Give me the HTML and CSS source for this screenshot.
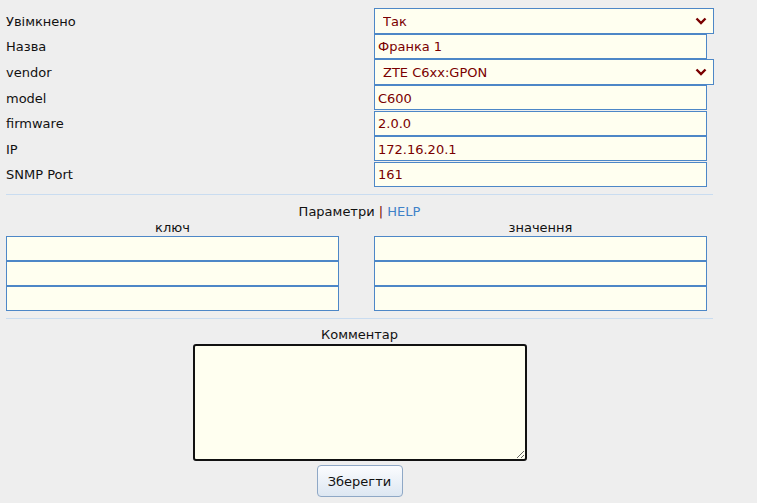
FILE: index.html
```html
<!DOCTYPE html>
<html lang="uk">
<head>
<meta charset="utf-8">
<link rel="stylesheet" href="styles.css">
</head>
<body>
<div class="page">
  <div class="fields">
    <label class="lbl">Увімкнено</label>
    <select class="ctl sel"><option>Так</option></select>
    <label class="lbl">Назва</label>
    <input class="ctl inp" value="Франка 1">
    <label class="lbl">vendor</label>
    <select class="ctl sel"><option>ZTE C6xx:GPON</option></select>
    <label class="lbl">model</label>
    <input class="ctl inp" value="C600">
    <label class="lbl">firmware</label>
    <input class="ctl inp" value="2.0.0">
    <label class="lbl">IP</label>
    <input class="ctl inp" value="172.16.20.1">
    <label class="lbl">SNMP Port</label>
    <input class="ctl inp" value="161">
  </div>
  <div class="sep"></div>
  <div class="ptitle">Параметри <span class="bar">|</span> <a class="help" href="#">HELP</a></div>
  <div class="params">
    <div class="pcol">
      <div class="phead">ключ</div>
      <input class="pin">
      <input class="pin">
      <input class="pin">
    </div>
    <div class="pcol">
      <div class="phead">значення</div>
      <input class="pin">
      <input class="pin">
      <input class="pin">
    </div>
  </div>
  <div class="sep sep2"></div>
  <div class="comment">
    <div class="chead">Комментар</div>
    <textarea class="area"></textarea>
    <button class="save">Зберегти</button>
  </div>
</div>
</body>
</html>
```
FILE: styles.css
```css
html, body {
  margin: 0;
  padding: 0;
  background: #eeeeee;
}
body {
  font-family: "DejaVu Sans", Verdana, sans-serif;
  font-size: 13px;
  color: #111;
}
.page {
  width: 707px;
  padding: 8px 0 0 6px;
}
.fields {
  display: grid;
  grid-template-columns: 368px 340px;
  grid-auto-rows: 25.6px;
  align-items: center;
}
.lbl {
  line-height: 16px;
  padding-top: 2px;
}
.ctl {
  box-sizing: border-box;
  font-family: inherit;
  font-size: 13px;
  color: #7a0000;
  background-color: #fffff0;
  border: 1px solid #4d87c7;
  margin: 0;
  outline: none;
}
.inp {
  width: 333px;
  height: 25px;
  padding: 1px 3px 0 3px;
}
.sel {
  width: 340px;
  height: 26px;
  padding: 1px 20px 0 8px;
  border-radius: 0;
  appearance: none;
  -webkit-appearance: none;
  background-image: url("data:image/svg+xml,%3Csvg xmlns='http://www.w3.org/2000/svg' width='12' height='8' viewBox='0 0 12 8'%3E%3Cpath d='M1.5 1.5 L6 6 L10.5 1.5' fill='none' stroke='%237a0000' stroke-width='2.4'/%3E%3C/svg%3E");
  background-repeat: no-repeat;
  background-position: right 6px center;
}
.sep {
  height: 1px;
  background: #c9dcf0;
  margin-top: 7px;
}
.ptitle {
  text-align: center;
  margin-top: 9px;
  line-height: 16px;
}
.bar {
  color: #7a0000;
}
.help {
  color: #3f82c8;
  text-decoration: none;
}
.params {
  display: grid;
  grid-template-columns: 333px 333px;
  column-gap: 35px;
}
.pcol {
  display: flex;
  flex-direction: column;
}
.phead {
  text-align: center;
  line-height: 15px;
  margin-bottom: 1px;
}
.pin {
  box-sizing: border-box;
  width: 333px;
  height: 25px;
  margin: 0;
  background: #fffff0;
  border: 1px solid #4d87c7;
  outline: none;
}
.sep2 {
  margin-top: 7px;
}
.comment {
  display: flex;
  flex-direction: column;
  align-items: center;
  margin-top: 8px;
}
.chead {
  line-height: 16px;
}
.area {
  box-sizing: border-box;
  width: 334px;
  height: 117px;
  margin: 1px 0 0 0;
  background: #fffff0;
  border: 2px solid #111;
  border-radius: 3px;
  outline: none;
}
.save {
  margin-top: 4px;
  width: 86px;
  height: 32px;
  font-family: inherit;
  font-size: 13px;
  color: #111;
  border: 1px solid #8fa8c6;
  border-radius: 4px;
  background: linear-gradient(#fbfcfe, #dde7f2);
}
```
